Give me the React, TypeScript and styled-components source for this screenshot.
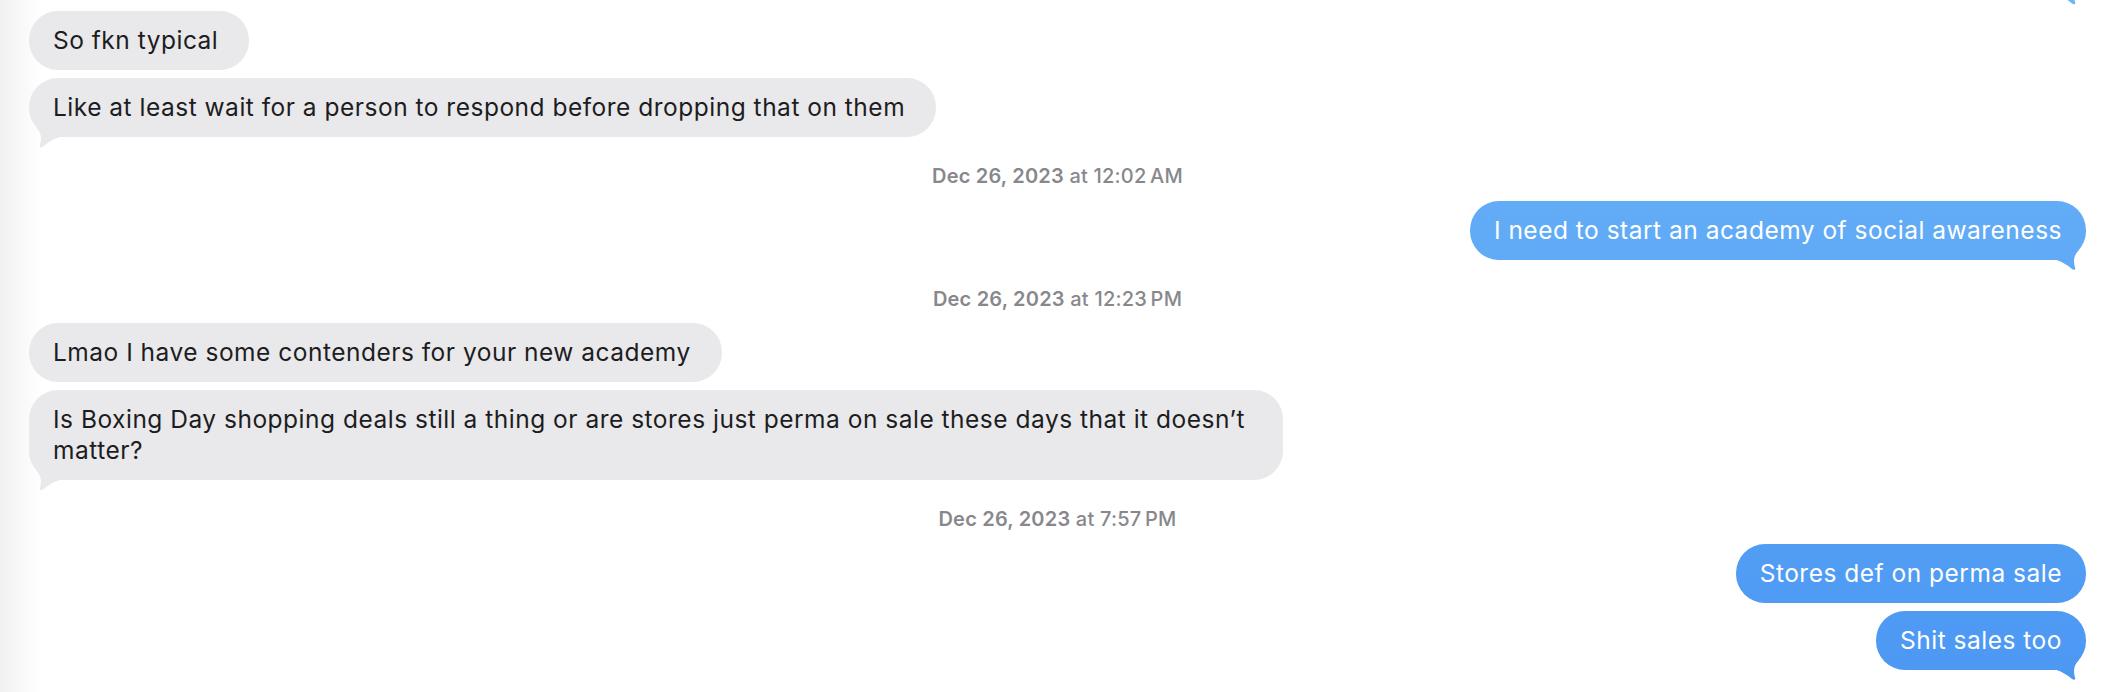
import { Fragment } from 'react'
import styled, { createGlobalStyle, css } from 'styled-components'

const Global = createGlobalStyle`
  html, body {
    margin: 0;
    padding: 0;
    background: #fff;
  }
  body {
    font-family: "Inter", "Noto Sans", sans-serif;
    -webkit-font-smoothing: antialiased;
  }
`

// sidebar shadow on the left edge of the conversation pane
const Pane = styled.div`
    height: 692px;
    overflow: hidden;
    background: linear-gradient(90deg, #f0f0f0 0px, #f8f8f8 18px, #ffffff 44px);
`

const Transcript = styled.main`
    display: flex;
    flex-direction: column;
    padding: 11px 20px 0 29px;
`

const Group = styled.section<{ $mine?: boolean }>`
    display: flex;
    flex-direction: column;
    gap: 8px;
    align-items: ${p => (p.$mine ? 'flex-end' : 'flex-start')};
`

const TAIL = "path('M 0 24 L 1 24 C 8 26 14 30 18 33.5 C 19.5 34.8 21.8 34.6 21.2 32.6 C 20.2 29.5 19.6 25.5 20.5 21.8 C 21.4 18.6 23.4 16.4 25 14 L 4 4 L 0 24 Z')"

const Bubble = styled.div<{ $mine?: boolean; $tail?: boolean }>`
    position: relative;
    box-sizing: border-box;
    max-width: 1254px;
    padding: 14px ${p => (p.$mine ? '24px' : '31px')} 14px 24px;
    border-radius: 29px;
    font-size: 24.5px;
    letter-spacing: 0.5px;
    line-height: 31px;
    color: ${p => (p.$mine ? '#ffffff' : '#1d1d1f')};
    background: ${p =>
        p.$mine
            ? 'linear-gradient(180deg, #6cb5f8 0px, #4b97f3 692px) fixed'
            : '#e9e9eb'};

    ${p =>
        p.$tail &&
        css`
            &::after {
                content: '';
                position: absolute;
                bottom: -12px;
                width: 40px;
                height: 36px;
                background: inherit;
                clip-path: ${TAIL};
                ${p.$mine ? 'right: -8px;' : 'left: -8px; transform: scaleX(-1);'}
            }
        `}
`

// tail of the previous (scrolled away) message peeking in at the top
const Earlier = styled(Bubble)`
    width: 320px;
    height: 59px;
    margin-top: -76px;
    margin-bottom: 9px;
`

const Stamp = styled.div`
    align-self: center;
    margin: 27px 0 12.5px;
    font-size: 20px;
    letter-spacing: 0.2px;
    line-height: 24px;
    font-weight: 500;
    color: #88888c;

    b {
        font-weight: 600;
    }
`

type Msg = { text: string; mine?: boolean }
type Block = { stamp?: [string, string]; mine?: boolean; msgs: Msg[] }

const blocks: Block[] = [
    {
        msgs: [
            { text: 'So fkn typical' },
            { text: 'Like at least wait for a person to respond before dropping that on them' },
        ],
    },
    {
        stamp: ['Dec 26, 2023', 'at 12:02\u202fAM'],
        mine: true,
        msgs: [{ text: 'I need to start an academy of social awareness' }],
    },
    {
        stamp: ['Dec 26, 2023', 'at 12:23\u202fPM'],
        msgs: [
            { text: 'Lmao I have some contenders for your new academy' },
            {
                text: 'Is Boxing Day shopping deals still a thing or are stores just perma on sale these days that it doesn\u2019t matter?',
            },
        ],
    },
    {
        stamp: ['Dec 26, 2023', 'at 7:57\u202fPM'],
        mine: true,
        msgs: [{ text: 'Stores def on perma sale' }, { text: 'Shit sales too' }],
    },
]

export default function App() {
    return (
        <Pane>
            <Global />
            <Transcript>
                <Group $mine>
                    <Earlier $mine $tail aria-hidden />
                </Group>
                {blocks.map((b, i) => (
                    <Fragment key={i}>
                        {b.stamp && (
                            <Stamp>
                                <b>{b.stamp[0]}</b> {b.stamp[1]}
                            </Stamp>
                        )}
                        <Group $mine={b.mine}>
                            {b.msgs.map((m, j) => (
                                <Bubble key={j} $mine={b.mine} $tail={j === b.msgs.length - 1}>
                                    {m.text}
                                </Bubble>
                            ))}
                        </Group>
                    </Fragment>
                ))}
            </Transcript>
        </Pane>
    )
}
